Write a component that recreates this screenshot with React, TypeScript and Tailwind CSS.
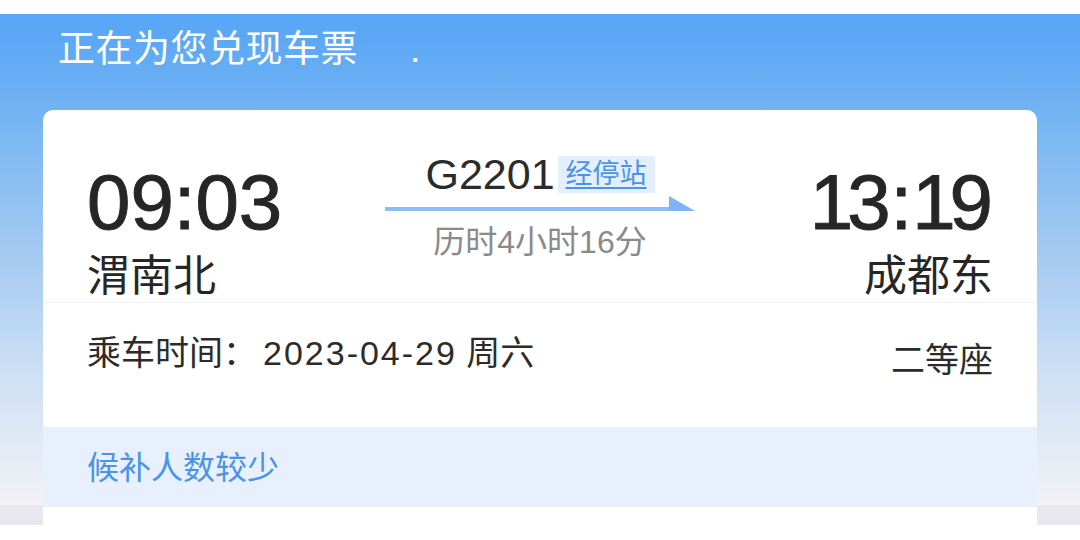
export default function App() {
  return (
    <div className="w-[1080px] h-[540px] overflow-hidden bg-[linear-gradient(180deg,#ffffff_0px,#ffffff_14px,#56a5f6_14px,#62abf5_60px,#72b3f3_110px,#a3c9f2_250px,#cfe1f5_380px,#f3f2f6_505px,#e9e8f0_505px,#e9e8f0_525px,#ffffff_525px)] font-['Liberation_Sans','Noto_Sans_CJK_SC',sans-serif]">
      <div className="h-[110px] pt-[31px] pl-[58px] flex items-start text-white text-[37px] leading-[37px]">
        <span className="tracking-[0.5px]">正在为您兑现车票</span>
        <span className="ml-[52px]">.</span>
      </div>

      <div className="mx-[43px] h-[430px] rounded-t-[10px] bg-white">
        <div className="h-[193px] grid grid-cols-[1fr_auto_1fr] px-[44px] pt-[43px] border-b border-[#eef0f4] text-[#262626]">
          <div className="mt-[10px] flex flex-col items-start">
            <div className="text-[78px] leading-[78px] [-webkit-text-stroke:1px_#262626]">09:03</div>
            <div className="mt-[14px] text-[43px] leading-[43px]">渭南北</div>
          </div>

          <div className="flex flex-col items-center">
            <div className="flex items-center gap-[3px]">
              <span className="text-[43px] leading-[43px] text-[#2b2b2b]">G2201</span>
              <span className="h-[37px] px-[8px] flex items-center bg-[#e4effd] text-[#4a93e6] text-[27px] leading-[27px] underline underline-offset-[4px] decoration-[1.5px]">
                经停站
              </span>
            </div>
            <svg width="310" height="16" viewBox="0 0 310 16">
              <rect x="0" y="11" width="290" height="4" fill="#8dbdf5" />
              <polygon points="284,0 310,15 284,15" fill="#7db4f3" />
            </svg>
            <div className="mt-[14px] text-[32px] leading-[32px] text-[#8a8a8a]">历时4小时16分</div>
          </div>

          <div className="mt-[10px] flex flex-col items-end">
            <div className="text-[78px] leading-[78px] [-webkit-text-stroke:1px_#262626]">
              <span className="tracking-[-6px]">1</span>3:<span className="tracking-[-6px]">1</span>9
            </div>
            <div className="mt-[14px] text-[43px] leading-[43px]">成都东</div>
          </div>
        </div>

        <div className="h-[124px] flex justify-between items-start px-[44px] text-[#2b2b2b] text-[34px] leading-[34px]">
          <div className="mt-[33px]">
            乘车时间：<span className="ml-[6px] tracking-[2px]">2023-04-29</span> 周六
          </div>
          <div className="mt-[40px]">二等座</div>
        </div>

        <div className="h-[80px] bg-[#e7f0fc] px-[44px] pt-[25px] text-[#4a93e6] text-[32px] leading-[32px]">
          候补人数较少
        </div>
      </div>
    </div>
  )
}
